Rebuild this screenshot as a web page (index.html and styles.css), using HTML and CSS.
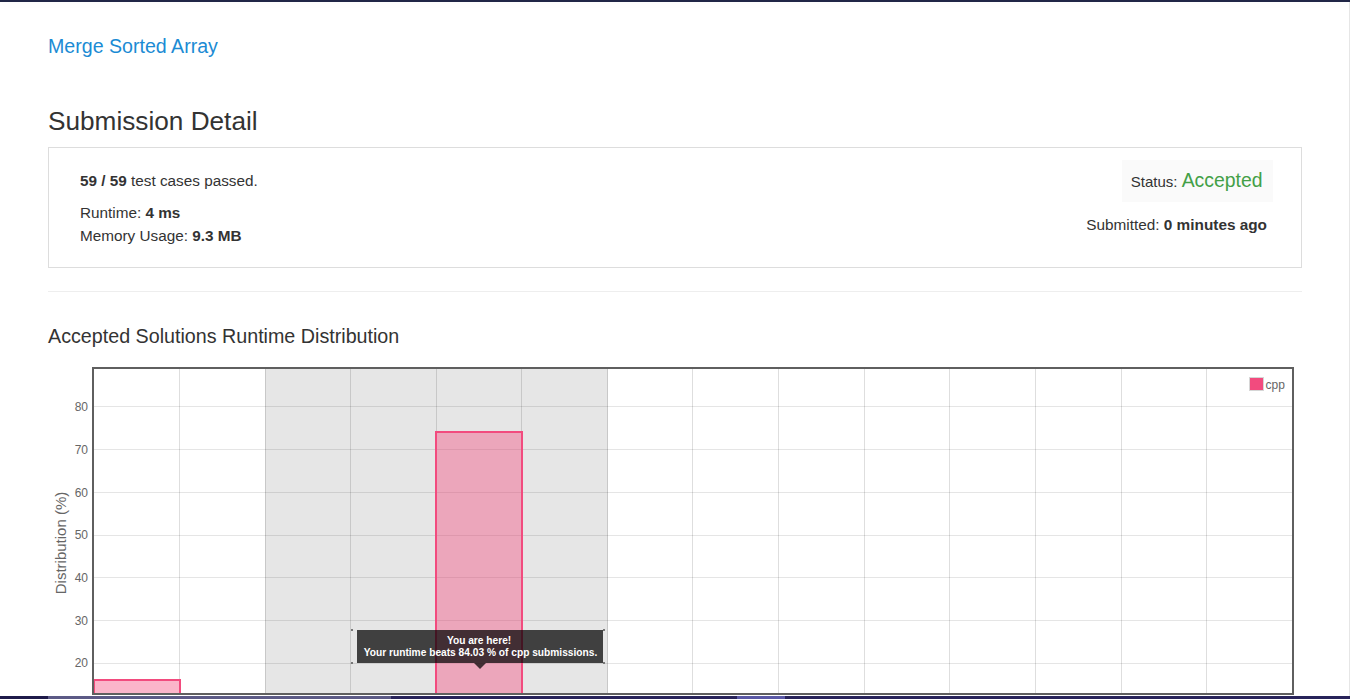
FILE: index.html
```html
<!DOCTYPE html>
<html lang="en">
<head>
<meta charset="utf-8">
<title>Submission Detail</title>
<link rel="stylesheet" href="styles.css">
</head>
<body>
<div class="topbar"></div>
<main class="page">
  <a class="problem-link" href="#">Merge Sorted Array</a>
  <h1 class="title">Submission Detail</h1>
  <section class="detail-box">
    <div class="detail-left">
      <p class="cases"><b>59 / 59</b> test cases passed.</p>
      <p class="stat">Runtime: <b>4 ms</b></p>
      <p class="stat">Memory Usage: <b>9.3 MB</b></p>
    </div>
    <div class="detail-right">
      <div class="status">Status: <span class="accepted">Accepted</span></div>
      <div class="submitted">Submitted: <b>0 minutes ago</b></div>
    </div>
  </section>
  <hr class="divider">
  <h2 class="chart-title">Accepted Solutions Runtime Distribution</h2>
  <svg class="chart" viewBox="48 348 1254 351" width="1254" height="351" xmlns="http://www.w3.org/2000/svg">
    <rect x="94" y="369" width="1198" height="324" fill="#ffffff"/>
    <rect x="265" y="369" width="343" height="324" fill="#e6e6e6"/>
    <g stroke="rgba(0,0,0,0.1)" stroke-width="1">
      <line x1="94" x2="1292" y1="406.5" y2="406.5"/>
      <line x1="94" x2="1292" y1="449.5" y2="449.5"/>
      <line x1="94" x2="1292" y1="492.5" y2="492.5"/>
      <line x1="94" x2="1292" y1="535.5" y2="535.5"/>
      <line x1="94" x2="1292" y1="577.5" y2="577.5"/>
      <line x1="94" x2="1292" y1="620.5" y2="620.5"/>
      <line x1="94" x2="1292" y1="663.5" y2="663.5"/>
    </g>
    <g stroke="rgba(0,0,0,0.13)" stroke-width="1">
      <line x1="179.5" x2="179.5" y1="369" y2="693"/>
      <line x1="265.5" x2="265.5" y1="369" y2="693"/>
      <line x1="350.5" x2="350.5" y1="369" y2="693"/>
      <line x1="436.5" x2="436.5" y1="369" y2="693"/>
      <line x1="521.5" x2="521.5" y1="369" y2="693"/>
      <line x1="607.5" x2="607.5" y1="369" y2="693"/>
      <line x1="692.5" x2="692.5" y1="369" y2="693"/>
      <line x1="778.5" x2="778.5" y1="369" y2="693"/>
      <line x1="864.5" x2="864.5" y1="369" y2="693"/>
      <line x1="949.5" x2="949.5" y1="369" y2="693"/>
      <line x1="1035.5" x2="1035.5" y1="369" y2="693"/>
      <line x1="1121.5" x2="1121.5" y1="369" y2="693"/>
      <line x1="1206.5" x2="1206.5" y1="369" y2="693"/>
    </g>
    <rect x="94" y="680" width="86" height="14" fill="rgba(245,79,129,0.42)" stroke="#f24b7e" stroke-width="2"/>
    <rect x="436" y="432" width="86" height="262" fill="rgba(245,79,129,0.42)" stroke="#f24b7e" stroke-width="2"/>
    <rect x="93" y="368" width="1200" height="326" fill="none" stroke="#5f5f5f" stroke-width="2"/>
    <g class="tick" text-anchor="end">
      <text x="88" y="411">80</text>
      <text x="88" y="454">70</text>
      <text x="88" y="497">60</text>
      <text x="88" y="539">50</text>
      <text x="88" y="582">40</text>
      <text x="88" y="625">30</text>
      <text x="88" y="667">20</text>
    </g>
    <text class="axis-title" transform="translate(66 543) rotate(-90)" text-anchor="middle">Distribution (%)</text>
    <rect x="1249" y="377" width="15" height="14" fill="#d6d6d6"/>
    <rect x="1250" y="378" width="13" height="12" fill="#f24b7e"/>
    <text class="legend" x="1265.5" y="388.5">cpp</text>
    <rect x="357" y="630" width="246" height="33" fill="rgba(0,0,0,0.72)"/>
    <polygon points="474,663 486,663 480,669" fill="rgba(0,0,0,0.72)"/>
    <g fill="#777">
      <rect x="351" y="629" width="2" height="2"/>
      <rect x="603" y="629" width="2" height="2"/>
      <rect x="351" y="662" width="2" height="2"/>
      <rect x="603" y="662" width="2" height="2"/>
    </g>
    <text class="tip" text-anchor="middle">
      <tspan x="480.5" y="644">You are here!</tspan>
      <tspan x="480.5" y="655.5">Your runtime beats 84.03 % of cpp submissions.</tspan>
    </text>
  </svg>
</main>
<div class="strip">
  <span class="seg seg-a"></span>
  <span class="seg seg-b"></span>
  <span class="seg seg-c"></span>
  <span class="seg seg-d"></span>
  <span class="seg seg-e"></span>
</div>
</body>
</html>
```

FILE: styles.css
```css
html, body {
  margin: 0;
  padding: 0;
  height: 699px;
  overflow: hidden;
  background: #ffffff;
}

body {
  font-family: "Liberation Sans", Arial, sans-serif;
  color: #333333;
  font-size: 15px;
}

.topbar {
  height: 2px;
  background: #1f2545;
  box-shadow: 0 2px 10px rgba(0, 0, 0, 0.07);
  position: relative;
  z-index: 2;
}

.page {
  display: flex;
  flex-direction: column;
  align-items: flex-start;
  padding: 33px 47px 0 48px;
  width: 1254px;
  border-right: 1px solid #e6e6e6;
  box-sizing: content-box;
  height: 664px;
}

.problem-link {
  display: block;
  font-size: 19.6px;
  line-height: 22px;
  color: #1b8bd4;
  text-decoration: none;
}

.title {
  margin: 49px 0 11px;
  font-size: 26.2px;
  line-height: 30px;
  font-weight: normal;
  color: #333333;
}

.detail-box {
  width: 1254px;
  box-sizing: border-box;
  border: 1px solid #dddddd;
  display: flex;
  justify-content: space-between;
  align-items: flex-start;
  padding: 22.5px 28px 20.4px 31px;
}

.detail-left {
  font-size: 15.3px;
}

.detail-left p {
  margin: 0;
}

.cases {
  line-height: 20px;
  margin-bottom: 10px !important;
}

.stat {
  line-height: 23px;
}

.detail-right {
  display: flex;
  flex-direction: column;
  align-items: flex-end;
  margin-top: -10.5px;
}

.status {
  background: #fafafa;
  line-height: 41px;
  padding: 1px 10.5px 0 9px;
}

.accepted {
  color: #43a047;
  font-size: 19.4px;
  line-height: 1;
}

.submitted {
  margin-top: 13px;
  margin-right: 6px;
  line-height: 20px;
  font-size: 15.35px;
}

.divider {
  width: 1254px;
  margin: 23px 0 0;
  border: 0;
  border-top: 1px solid #eeeeee;
  height: 0;
}

.chart-title {
  margin: 33.5px 0 0;
  font-size: 19.7px;
  line-height: 22px;
  font-weight: normal;
  color: #333333;
}

.chart {
  display: block;
  margin-top: 0.5px;
  flex-shrink: 0;
}

.tick {
  font-family: "Liberation Sans", Arial, sans-serif;
  font-size: 12px;
  fill: #666666;
}

.axis-title {
  font-family: "Liberation Sans", Arial, sans-serif;
  font-size: 15px;
  fill: #666666;
}

.legend {
  font-family: "Liberation Sans", Arial, sans-serif;
  font-size: 12px;
  fill: #666666;
}

.tip {
  font-family: "Liberation Sans", Arial, sans-serif;
  font-size: 10.2px;
  font-weight: bold;
  fill: #ffffff;
}

.strip {
  position: fixed;
  left: 0;
  right: 0;
  bottom: 0;
  height: 3px;
  display: flex;
  z-index: 3;
}

.seg {
  display: block;
  height: 100%;
}

.seg-a { width: 48px; background: #1f1b4a; }
.seg-b { width: 343px; background: #5c5a86; }
.seg-c { width: 346px; background: #28235a; }
.seg-d { width: 48px; background: #5a58a6; }
.seg-e { flex: 1; background: #28235a; }
```
